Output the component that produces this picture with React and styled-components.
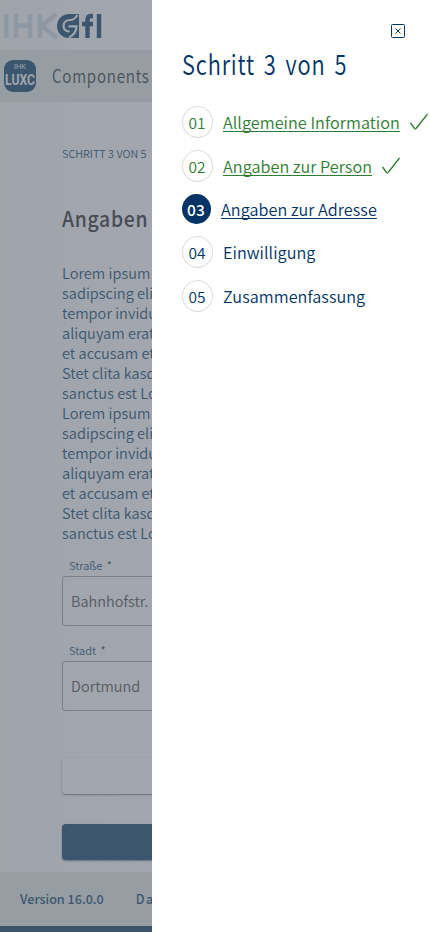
import React from "react";
import styled, { createGlobalStyle } from "styled-components";

const body = '"Noto Sans CJK SC", "Noto Sans", sans-serif';
const heading = '"Noto Sans CJK SC", "Noto Sans", sans-serif';

const Global = createGlobalStyle`
  * { box-sizing: border-box; }
  body { margin: 0; background: #a1a6ad; font-family: ${body}; overflow: hidden; }
  h1, h2, p, ol { margin: 0; padding: 0; }
`;

const Page = styled.div`
  position: relative;
  display: flex;
  flex-direction: column;
  width: 430px;
  height: 932px;
  overflow: hidden;
  background: linear-gradient(90deg, #a0a5ac, #a2a6ae 160px);
  color: #3c566f;
`;

const LogoBar = styled.header`
  height: 50px;
  flex: none;
  svg { display: block; }
`;

const AppBar = styled.div`
  display: flex;
  align-items: center;
  flex: none;
  gap: 16px;
  height: 52px;
  padding-left: 4px;
  background: #969ea3;
`;

const Squeezed = styled.span`
  display: inline-block;
  white-space: nowrap;
  transform: scaleX(${(p) => p.$x});
  transform-origin: 0 50%;
`;

const AppName = styled.div`
  padding-bottom: 2px;
  font: 350 18px/24px ${heading};
  letter-spacing: 0.9px;
  color: #4a4f57;
`;

const Main = styled.main`
  display: flex;
  flex-direction: column;
  height: 770px;
  flex: none;
  padding: 43px 62px 0;
`;

const StepHint = styled.div`
  font-size: 10.8px;
  line-height: 16px;
  font-weight: 350;
`;

const Title = styled.h1`
  margin-top: 40px;
  font: 500 22px/32px ${heading};
  letter-spacing: 0.8px;
  color: #474c55;
`;

const Copy = styled.p`
  margin-top: 30px;
  font-size: 14.6px;
  font-weight: 350;
  line-height: 20px;
  white-space: pre;
`;

const FieldLabel = styled.label`
  display: block;
  margin-top: ${(p) => p.$top}px;
  padding-left: 7px;
  font-size: 11px;
  font-weight: 350;
  line-height: 16px;
  word-spacing: 2px;
`;

const Field = styled.div`
  height: 50px;
  flex: none;
  margin-top: ${(p) => p.$gap}px;
  padding-left: 8px;
  border: 1px solid #7c8189;
  border-radius: 3px;
  font-size: 14.5px;
  font-weight: 350;
  line-height: 48px;
  color: #565a62;
`;

const Button = styled.div`
  height: 36px;
  flex: none;
  margin-top: ${(p) => p.$top}px;
  border-radius: 4px;
  background: ${(p) => (p.$solid ? "#3c566f" : "#a2a6ae")};
  box-shadow: 0 1px 2px rgba(50, 55, 65, 0.5);
`;

const Footer = styled.footer`
  display: flex;
  align-items: center;
  gap: 32px;
  height: 60px;
  flex: none;
  padding: 0 0 2px 20px;
  border-bottom: 6px solid #3c526c;
  background: #969ea3;
  font-size: 12.6px;
  font-weight: 500;
`;

const Spaced = styled.span`
  letter-spacing: 1.5px;
`;

const Drawer = styled.aside`
  position: absolute;
  inset: 0 0 0 152px;
  padding: 24px 0 0 30px;
  background: #fff;
  color: #003366;
`;

const CloseRow = styled.div`
  display: flex;
  justify-content: flex-end;
  padding-right: 25px;
  svg { display: block; }
`;

const DrawerTitle = styled.h2`
  margin-top: 7px;
  font: 350 27.5px/36px ${heading};
  letter-spacing: 1.1px;
  word-spacing: 4px;
  height: 36px;
`;

const Steps = styled.ol`
  display: flex;
  flex-direction: column;
  gap: 12px;
  margin-top: 25px;
  list-style: none;
`;

const Step = styled.li`
  display: flex;
  align-items: center;
  gap: 10px;
  font-size: 16.2px;
  font-weight: 350;
  letter-spacing: 0.05px;
  line-height: 22px;
  white-space: nowrap;
  color: ${(p) => (p.$state === "done" ? "#2e7d32" : "#003366")};
`;

const Number = styled.span`
  display: flex;
  align-items: center;
  justify-content: center;
  flex: none;
  width: ${(p) => (p.$active ? 29 : 31)}px;
  height: ${(p) => (p.$active ? 30 : 32)}px;
  padding: 0 1px 1px 0;
  border-radius: 50%;
  border: ${(p) => (p.$active ? "0" : "1px solid #ddd")};
  background: ${(p) => (p.$active ? "#003366" : "#fff")};
  color: ${(p) => (p.$active ? "#fff" : "inherit")};
  font-size: 15.5px;
  font-weight: ${(p) => (p.$active ? 500 : 350)};
`;

const StepLabel = styled.span`
  text-decoration: ${(p) => (p.$link ? "underline" : "none")};
  text-decoration-thickness: 1px;
  text-decoration-skip-ink: none;
  text-underline-offset: 2px;
`;

const Logo = () => (
  <svg width="110" height="50" viewBox="0 0 110 50">
    <g fill="none" stroke="#8d98a2" strokeWidth="4.6">
      <path d="M6.3 14v24M16 14v24M30 14v24M16 25.500H30M40 14v24M56 14L42 26L57 38" />
    </g>
    <path d="M79 14V38H69A12 12 0 1 1 69 14Z" fill="#3c566f" />
    <path d="M77.500 15C75.500 18 73.500 20 70.500 20C66.500 20 63.500 22.500 63.500 26C63.500 30 67 32 69.500 31M68.500 26.300H76.500C76.500 32 74 35 69 37.500" fill="none" stroke="#a1a6ad" strokeWidth="2.200" />
    <path d="M93 16H91Q87.500 16 87.500 20V38M82 24H93M99 14V38" fill="none" stroke="#3c566f" strokeWidth="4.400" />
  </svg>
);

const Badge = () => (
  <svg width="32" height="32" viewBox="0 0 32 32">
    <rect width="32" height="32" rx="9" fill="#3c566f" />
    <text x="10" y="9" fontFamily="Roboto" fontSize="7.500" fill="#a1a6ad" textLength="12">IHK</text>
    <text x="1" y="25" fontFamily="Roboto" fontWeight="700" fontSize="14.500" fill="#a1a6ad" textLength="30" lengthAdjust="spacingAndGlyphs">LUXC</text>
  </svg>
);

const Check = () => (
  <svg width="18" height="18" viewBox="0 0 18 18" fill="none" stroke="currentColor" strokeWidth="1.300">
    <path d="M0.500 10L4.500 15.500Q5.500 16.500 6.500 15L17.500 1" />
  </svg>
);

const lines = [
  "Lorem ipsum dolor sit amet, consetetur",
  "sadipscing elitr, sed diam nonumy eirmod",
  "tempor invidunt ut labore et dolore magna",
  "aliquyam erat, sed diam voluptua. At vero eos",
  "et accusam et justo duo dolores et ea rebum.",
  "Stet clita kasd gubergren, no sea takimata",
  "sanctus est Lorem ipsum dolor sit amet.",
];

const steps = [
  ["01", "Allgemeine Information", "done"],
  ["02", "Angaben zur Person", "done"],
  ["03", "Angaben zur Adresse", "active"],
  ["04", "Einwilligung", "open"],
  ["05", "Zusammenfassung", "open"],
];

export default function App() {
  return (
    <>
      <Global />
      <Page>
        <LogoBar><Logo /></LogoBar>
        <AppBar>
          <Badge />
          <AppName><Squeezed $x={0.84}>Components</Squeezed></AppName>
        </AppBar>
        <Main>
          <StepHint>SCHRITT 3 VON 5</StepHint>
          <Title><Squeezed $x={0.88}>Angaben</Squeezed></Title>
          <Copy>{[...lines, ...lines].join("\n")}</Copy>
          <FieldLabel $top={14}>Straße *</FieldLabel>
          <Field $gap={3}>Bahnhofstr.</Field>
          <FieldLabel $top={16}>Stadt *</FieldLabel>
          <Field $gap={3}>Dortmund</Field>
          <Button $top={47} />
          <Button $top={30} $solid />
        </Main>
        <Footer><span>Version 16.0.0</span><Spaced>Datenschutz</Spaced></Footer>
        <Drawer>
          <CloseRow>
            <svg width="14" height="14" viewBox="0 0 14 14" fill="none" stroke="#003366">
              <rect x="0.500" y="0.500" width="13" height="13" rx="1" />
              <path d="M4.500 4.500L9.500 9.500M9.500 4.500L4.500 9.500" />
            </svg>
          </CloseRow>
          <DrawerTitle><Squeezed $x={0.793}>Schritt 3 von 5</Squeezed></DrawerTitle>
          <Steps>
            {steps.map(([n, label, state]) => (
              <Step key={n} $state={state}>
                <Number $active={state === "active"}>{n}</Number>
                <StepLabel $link={state !== "open"}>{label}</StepLabel>
                {state === "done" && <Check />}
              </Step>
            ))}
          </Steps>
        </Drawer>
      </Page>
    </>
  );
}
